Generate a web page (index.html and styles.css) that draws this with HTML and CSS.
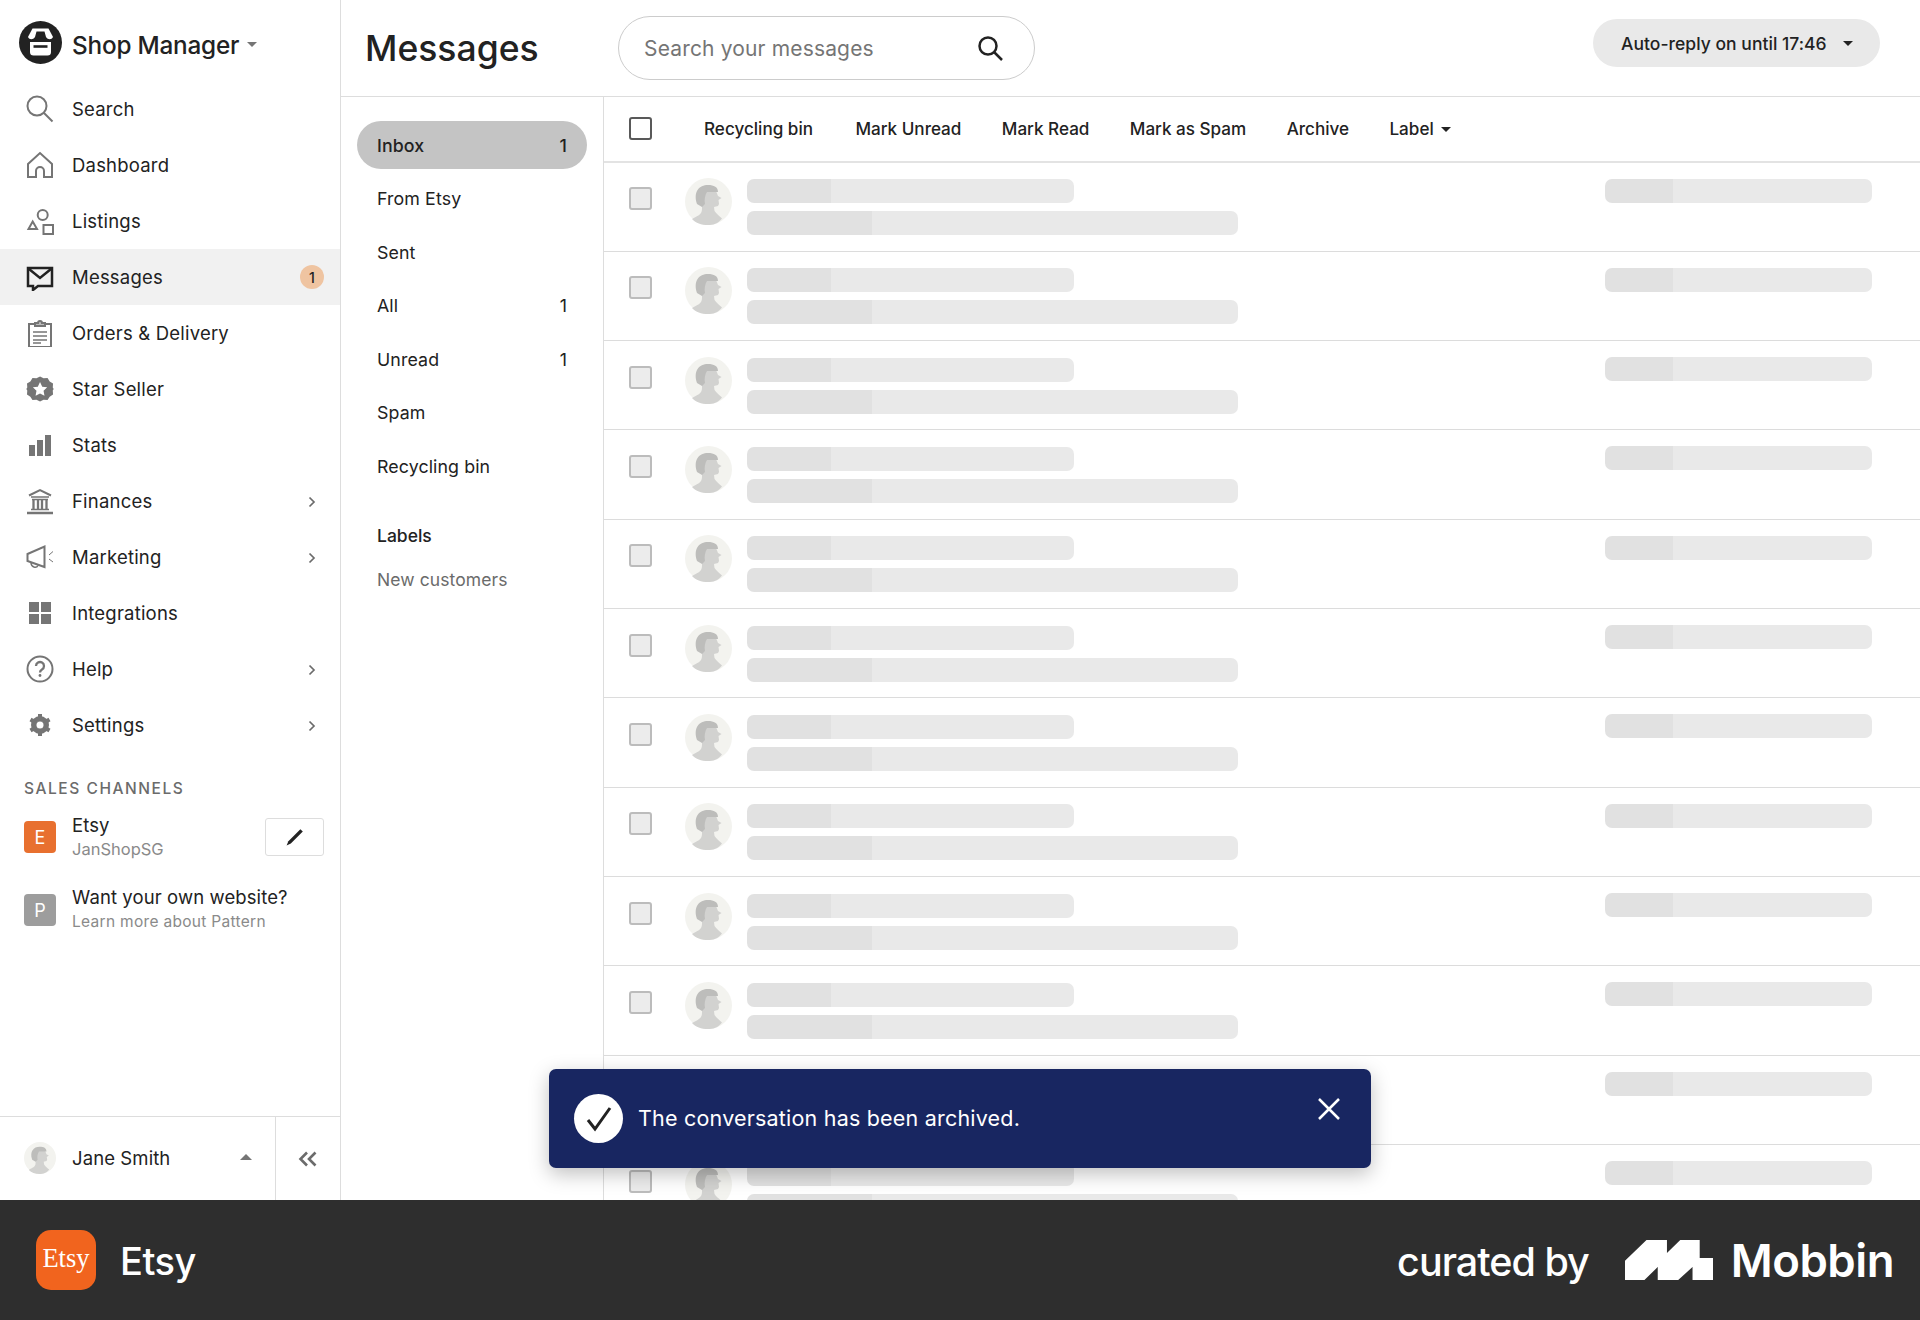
FILE: index.html
```html
<!DOCTYPE html>
<html lang="en">
<head>
<meta charset="utf-8">
<title>Messages - Shop Manager</title>
<link rel="stylesheet" href="styles.css">
</head>
<body>
<svg class="defs" width="0" height="0" aria-hidden="true">
  <symbol id="person" viewBox="0 0 47 47">
    <circle cx="23.5" cy="23.5" r="23.5" fill="#f3f3ef"/>
    <path fill="#d2d2d0" d="M7 41C12 38 17 37 17 31V18l6-6 8 1 2 5 3.500 2-3 2 .5 4-1 2-4 1 .5 4c2 3 5 5 7.500 7.500C33 46 28 47 23 47 16 47 11 45 7 41Z"/>
    <path fill="#bdbdbb" d="M12 26C8 14 14 7 23 7c6 0 10 2 10 7H22c-2 3-3 8-2 12l-3 3Z"/>
  </symbol>
  <symbol id="chev" viewBox="0 0 8 12">
    <path d="M1.500 1.500 6 6l-4.500 4.500" fill="none" stroke="#6b6b6b" stroke-width="1.700"/>
  </symbol>
</svg>
<div class="app">
  <aside class="sidebar">
    <div class="brand">
      <svg class="brand-logo" viewBox="0 0 43 43">
        <circle cx="21.500" cy="21.500" r="21.500" fill="#222"/>
        <path d="M13.500 7.500h16l4.500 8.500H9Z" fill="#fff"/>
        <path d="M16 16l1.500-5.500h8L27 16c-1.500 2.800-3.800 2.800-5.500 0-1.700 2.800-4 2.800-5.500 0Z" fill="#222"/>
        <path d="M9 16c1.500 3 5 3 7 0h11c2 3 5.500 3 7 0" fill="#fff"/>
        <path d="M11 21h21v10a3.500 3.500 0 0 1-3.500 3.500h-14A3.500 3.500 0 0 1 11 31Z" fill="#fff"/>
        <path d="M14.500 25.500h14" stroke="#222" stroke-width="2.600"/>
      </svg>
      <span class="brand-name">Shop Manager</span>
      <span class="tri tri-down tri-gray tri-small"></span>
    </div>
    <nav class="nav">
      <a class="nav-item"><svg class="nav-icon" viewBox="0 0 28 28" fill="none" stroke="#757575" stroke-width="2"><circle cx="11" cy="11" r="9.500"/><path d="m18 18 8.500 8.500"/></svg><span>Search</span></a>
      <a class="nav-item"><svg class="nav-icon" viewBox="0 0 28 28" fill="none" stroke="#757575" stroke-width="2"><path d="M2 26V13L14 2l12 11v13h-8v-6a4 4 0 0 0-8 0v6Z"/></svg><span>Dashboard</span></a>
      <a class="nav-item"><svg class="nav-icon" viewBox="0 0 28 28" fill="none" stroke="#757575" stroke-width="2"><circle cx="16.700" cy="8" r="5"/><path d="M2.500 22H11L6.700 14.500Z"/><path d="M17.500 18h9.500v9h-9.500Z"/></svg><span>Listings</span></a>
      <a class="nav-item nav-active"><svg class="nav-icon" viewBox="0 0 28 28" fill="none" stroke="#222" stroke-width="2.500"><path d="M2 5h24v18H12l-5 4v-4H2Z"/><path d="m3 6 11 9 11-9"/></svg><span>Messages</span><span class="badge">1</span></a>
      <a class="nav-item"><svg class="nav-icon" viewBox="0 0 28 28" fill="none" stroke="#757575" stroke-width="2"><path d="M9 5H3v23h22V5h-6"/><path d="M9 7V4h3a2 2 0 0 1 4 0h3v3Z" fill="#bbb"/><path d="M7 13h14M7 17h14M7 21h14M7 24h8" stroke-width="1.300"/></svg><span>Orders &amp; Delivery</span></a>
      <a class="nav-item"><svg class="nav-icon" viewBox="0 0 28 28"><g transform="translate(1 1) scale(.93)"><path fill="#757575" d="m14 .5 3.800 2 4.300-.3 2.300 3.600 3.600 2.300-.3 4.300 1 1.600-1 1.600.3 4.300-3.600 2.300-2.300 3.600-4.300-.3-3.800 2-3.800-2-4.300.3-2.300-3.600-3.600-2.300.3-4.300-1-1.600 1-1.600-.3-4.300 3.600-2.300 2.300-3.600 4.300.3Z"/><path fill="#fff" d="m14 6.500 2.400 5 5.300.7-3.900 3.700 1 5.400-4.800-2.600-4.800 2.600 1-5.400-3.900-3.700 5.300-.7Z"/></g></svg><span>Star Seller</span></a>
      <a class="nav-item"><svg class="nav-icon" viewBox="0 0 28 28" fill="#757575"><rect x="3" y="14" width="6" height="11"/><rect x="11" y="9" width="6" height="16"/><rect x="19" y="4" width="6" height="21"/></svg><span>Stats</span></a>
      <a class="nav-item"><svg class="nav-icon" viewBox="0 0 28 28" fill="none" stroke="#757575" stroke-width="2"><path d="M3 8.500 14 3l11 5.500" stroke-width="2"/><path d="M5 10h18M6 12.500h16M5 22.500h18" stroke-width="1.500"/><path d="M7.500 13v9M12 13v9M16 13v9M20.500 13v9" stroke-width="2.300"/><path d="M1 26h26" stroke-width="2.500"/></svg><span>Finances</span><svg class="chev" viewBox="0 0 8 12"><use href="#chev"/></svg></a>
      <a class="nav-item"><svg class="nav-icon" viewBox="0 0 28 28" fill="none" stroke="#757575" stroke-width="2"><path d="M1.500 11v7l17 6V3.500Z"/><path d="M5 19.500c0 5 5.500 6 7 3" stroke-width="1.500"/><path d="m27 8.500-4 3.500 0 0M23 16l4 3" stroke-width="1"/></svg><span>Marketing</span><svg class="chev" viewBox="0 0 8 12"><use href="#chev"/></svg></a>
      <a class="nav-item"><svg class="nav-icon" viewBox="0 0 28 28" fill="#757575"><rect x="3" y="3" width="10" height="10"/><rect x="15" y="3" width="10" height="10"/><rect x="3" y="15" width="10" height="10"/><rect x="15" y="15" width="10" height="10"/></svg><span>Integrations</span></a>
      <a class="nav-item"><svg class="nav-icon" viewBox="0 0 28 28" fill="none" stroke="#757575" stroke-width="2"><circle cx="14" cy="14" r="12.500"/><path d="M10 11a4 4 0 1 1 6 3.500c-1.300.8-2 1.500-2 3" stroke-width="2.300"/><circle cx="14" cy="20.500" r="1.400" fill="#757575" stroke="none"/></svg><span>Help</span><svg class="chev" viewBox="0 0 8 12"><use href="#chev"/></svg></a>
      <a class="nav-item"><svg class="nav-icon" viewBox="0 0 28 28" fill="none" stroke="#757575"><circle cx="14" cy="14" r="6.500" stroke-width="5"/><path d="M14 3v22M4.500 8.500l19 11M4.500 19.500l19-11" stroke-width="4"/><circle cx="14" cy="14" r="3.500" fill="#fff" stroke="none"/></svg><span>Settings</span><svg class="chev" viewBox="0 0 8 12"><use href="#chev"/></svg></a>
    </nav>
    <h2 class="channels-title">SALES CHANNELS</h2>
    <div class="channel">
      <span class="channel-mark mark-etsy">E</span>
      <div class="channel-text"><div class="channel-name">Etsy</div><div class="channel-sub">JanShopSG</div></div>
      <button class="edit-btn" type="button"><svg viewBox="0 0 20 20" width="24" height="24" fill="#222"><path d="M4.500 13.500 14.500 3.500l2 2L6.500 15.500 3 17Z"/></svg></button>
    </div>
    <div class="channel channel-pattern">
      <span class="channel-mark mark-pattern">P</span>
      <div class="channel-text"><div class="channel-name">Want your own website?</div><div class="channel-sub channel-sub-small">Learn more about Pattern</div></div>
    </div>
    <div class="user-bar">
      <div class="user">
        <svg class="user-avatar" viewBox="0 0 47 47"><use href="#person"/></svg>
        <span>Jane Smith</span>
        <span class="tri tri-up tri-gray"></span>
      </div>
      <div class="collapse">
        <svg viewBox="0 0 20 16" width="20" height="16" fill="none" stroke="#6b6b6b" stroke-width="2.600"><path d="M9 1.500 2.500 8 9 14.500M17.500 1.500 11 8l6.500 6.500"/></svg>
      </div>
    </div>
  </aside>

  <main class="main">
    <header class="topbar">
      <h1 class="page-title">Messages</h1>
      <div class="search">
        <span class="search-text">Search your messages</span>
        <svg viewBox="0 0 28 28" width="28" height="28" fill="none" stroke="#222" stroke-width="2.500"><circle cx="12" cy="12" r="8.500"/><path d="m18 18 8 8"/></svg>
      </div>
      <div class="auto-reply"><span>Auto-reply on until 17:46</span><span class="tri tri-down tri-dark tri-small"></span></div>
    </header>
    <div class="content">
      <div class="folders">
        <div class="folder folder-active"><span>Inbox</span><span>1</span></div>
        <div class="folder"><span>From Etsy</span></div>
        <div class="folder"><span>Sent</span></div>
        <div class="folder"><span>All</span><span>1</span></div>
        <div class="folder"><span>Unread</span><span>1</span></div>
        <div class="folder"><span>Spam</span></div>
        <div class="folder"><span>Recycling bin</span></div>
        <div class="labels-title">Labels</div>
        <div class="label-item">New customers</div>
      </div>
      <section class="list">
        <div class="toolbar">
          <span class="check check-main"></span>
          <div class="actions">
            <span class="action-first">Recycling bin</span><span>Mark Unread</span><span>Mark Read</span><span>Mark as Spam</span><span>Archive</span>
            <span class="action-label">Label<span class="tri tri-down tri-dark tri-small"></span></span>
          </div>
        </div>
        <div class="row"><span class="check"></span><svg class="avatar" viewBox="0 0 47 47"><use href="#person"/></svg><div class="lines"><div class="bar bar-a"></div><div class="bar bar-b"></div></div><div class="bar bar-c"></div></div>
        <div class="row"><span class="check"></span><svg class="avatar" viewBox="0 0 47 47"><use href="#person"/></svg><div class="lines"><div class="bar bar-a"></div><div class="bar bar-b"></div></div><div class="bar bar-c"></div></div>
        <div class="row"><span class="check"></span><svg class="avatar" viewBox="0 0 47 47"><use href="#person"/></svg><div class="lines"><div class="bar bar-a"></div><div class="bar bar-b"></div></div><div class="bar bar-c"></div></div>
        <div class="row"><span class="check"></span><svg class="avatar" viewBox="0 0 47 47"><use href="#person"/></svg><div class="lines"><div class="bar bar-a"></div><div class="bar bar-b"></div></div><div class="bar bar-c"></div></div>
        <div class="row"><span class="check"></span><svg class="avatar" viewBox="0 0 47 47"><use href="#person"/></svg><div class="lines"><div class="bar bar-a"></div><div class="bar bar-b"></div></div><div class="bar bar-c"></div></div>
        <div class="row"><span class="check"></span><svg class="avatar" viewBox="0 0 47 47"><use href="#person"/></svg><div class="lines"><div class="bar bar-a"></div><div class="bar bar-b"></div></div><div class="bar bar-c"></div></div>
        <div class="row"><span class="check"></span><svg class="avatar" viewBox="0 0 47 47"><use href="#person"/></svg><div class="lines"><div class="bar bar-a"></div><div class="bar bar-b"></div></div><div class="bar bar-c"></div></div>
        <div class="row"><span class="check"></span><svg class="avatar" viewBox="0 0 47 47"><use href="#person"/></svg><div class="lines"><div class="bar bar-a"></div><div class="bar bar-b"></div></div><div class="bar bar-c"></div></div>
        <div class="row"><span class="check"></span><svg class="avatar" viewBox="0 0 47 47"><use href="#person"/></svg><div class="lines"><div class="bar bar-a"></div><div class="bar bar-b"></div></div><div class="bar bar-c"></div></div>
        <div class="row"><span class="check"></span><svg class="avatar" viewBox="0 0 47 47"><use href="#person"/></svg><div class="lines"><div class="bar bar-a"></div><div class="bar bar-b"></div></div><div class="bar bar-c"></div></div>
        <div class="row"><span class="check"></span><svg class="avatar" viewBox="0 0 47 47"><use href="#person"/></svg><div class="lines"><div class="bar bar-a"></div><div class="bar bar-b"></div></div><div class="bar bar-c"></div></div>
        <div class="row"><span class="check"></span><svg class="avatar" viewBox="0 0 47 47"><use href="#person"/></svg><div class="lines"><div class="bar bar-a"></div><div class="bar bar-b"></div></div><div class="bar bar-c"></div></div>
      </section>
    </div>
  </main>

  <div class="toast">
    <span class="toast-check"><svg viewBox="0 0 48 48" width="48" height="48" fill="none" stroke="#222" stroke-width="3"><path d="m13 25 7 9 15-21"/></svg></span>
    <span class="toast-text">The conversation has been archived.</span>
    <svg class="toast-close" viewBox="0 0 24 24" width="24" height="24" fill="none" stroke="#fff" stroke-width="2.500"><path d="m2 2 20 20M22 2 2 22"/></svg>
  </div>
</div>
<footer class="credit">
  <div class="credit-app">
    <span class="credit-icon">Etsy</span>
    <span class="credit-name">Etsy</span>
  </div>
  <div class="credit-by">
    <span class="credit-curated">curated by</span>
    <svg class="mobbin-logo" viewBox="0 0 86 40" width="88" height="40" preserveAspectRatio="none"><path fill="#fff" d="M0 40V20.700L21 0h20v13L54 0h19v18h13v22H66V27L52 40H32V27L19 40Z"/></svg>
    <span class="credit-mobbin">Mobbin</span>
  </div>
</footer>
</body>
</html>
```
FILE: styles.css
```css
* { box-sizing: border-box; }
html, body { margin: 0; padding: 0; }
body {
  width: 1920px;
  height: 1320px;
  overflow: hidden;
  background: #fff;
  color: #222;
  font-family: Inter, "Noto Sans", sans-serif;
  font-size: 18px;
}
.defs { position: absolute; }
.app { position: relative; display: flex; height: 1200px; overflow: hidden; }

/* Triangles */
.tri { display: inline-block; width: 0; height: 0; border-left: 6px solid transparent; border-right: 6px solid transparent; }
.tri-down { border-top: 6px solid #222; }
.tri-up { border-bottom: 6px solid #222; }
.tri-gray.tri-down { border-top-color: #757575; }
.tri-gray.tri-up { border-bottom-color: #757575; }
.tri-small { border-left-width: 5px; border-right-width: 5px; border-top-width: 5px; }
.action-label .tri-small { margin-left: 7px; }

/* Sidebar */
.sidebar { width: 341px; flex: none; display: flex; flex-direction: column; border-right: 1px solid #ddd; }
.brand { display: flex; align-items: center; height: 81px; padding: 4px 0 0 19px; }
.brand-logo { width: 43px; height: 43px; flex: none; }
.brand-name { margin-left: 10px; font-size: 24.300px; line-height: 30px; font-weight: 500; letter-spacing: -.2px; padding-top: 4px; }
.brand .tri { margin-left: 8px; margin-top: 4px; }
.nav { display: flex; flex-direction: column; }
.nav-item { display: flex; align-items: center; height: 56px; padding-left: 26px; font-size: 18.500px; color: #222; letter-spacing: .2px; }
.nav-active { background: #f1f1f1; }
.nav-icon { width: 28px; height: 28px; flex: none; margin-right: 18px; }
.chev { width: 8px; height: 12px; margin-left: auto; margin-right: 24px; margin-top: 2px; }
.badge { margin-left: auto; margin-right: 16px; width: 24px; height: 24px; border-radius: 50%; background: #efc4a1; font-size: 14px; font-weight: 500; display: flex; align-items: center; justify-content: center; }
.channels-title { margin: 26px 0 0 24px; font-size: 15.500px; line-height: 20px; font-weight: 500; color: #6b6b6b; letter-spacing: 1.550px; }
.channel { display: flex; align-items: center; margin: 14px 16px 0 24px; height: 48px; }
.channel-pattern { margin-top: 25px; }
.channel-mark { width: 32px; height: 32px; flex: none; border-radius: 4px; color: #fff; font-size: 18px; display: flex; align-items: center; justify-content: center; }
.mark-etsy { background: #e8702f; }
.mark-pattern { background: #9d9d9d; }
.channel-text { margin-left: 16px; flex: 1; }
.channel-name { font-size: 18.500px; line-height: 24px; letter-spacing: .1px; }
.channel-sub { font-size: 16.500px; line-height: 24px; color: #8a8a8a; }
.channel-sub-small { font-size: 15.500px; letter-spacing: .3px; line-height: 26px; }
.edit-btn { width: 59px; height: 38px; padding: 0; background: #fff; border: 1.500px solid #ddd; border-radius: 3px; display: flex; align-items: center; justify-content: center; }
.user-bar { margin-top: auto; height: 84px; display: flex; border-top: 1px solid #ddd; }
.user { flex: 1; display: flex; align-items: center; padding: 0 0 2px 24px; font-size: 18.500px; letter-spacing: .1px; }
.user-avatar { width: 32px; height: 32px; flex: none; margin-right: 16px; }
.user .tri { margin-left: auto; margin-right: 23px; margin-top: -2px; }
.collapse { width: 65px; flex: none; border-left: 1px solid #ddd; display: flex; align-items: center; justify-content: center; }

/* Main */
.main { flex: 1; min-width: 0; display: flex; flex-direction: column; }
.topbar { height: 97px; flex: none; display: flex; align-items: flex-start; border-bottom: 1.500px solid #ddd; padding-left: 24px; position: relative; }
.page-title { margin: 25px 0 0 0; font-size: 35.500px; line-height: 48px; font-weight: 500; letter-spacing: 0; width: 253px; }
.search { margin-top: 16px; width: 417px; height: 64px; border: 1.500px solid #ccc; border-radius: 32px; display: flex; align-items: center; justify-content: space-between; padding: 0 30px 0 25px; }
.search-text { font-size: 21px; color: #757575; letter-spacing: .16px; }
.auto-reply { margin: 19px 40px 0 auto; width: 287px; height: 48px; border-radius: 24px; background: #e9e9e9; display: flex; align-items: center; justify-content: space-between; padding: 0 27px 0 28px; font-size: 17.500px; font-weight: 500; letter-spacing: .03px; }
.content { flex: 1; min-height: 0; display: flex; }
.folders { width: 263px; flex: none; border-right: 1.500px solid #ddd; padding: 24px 16px 0; }
.folder { height: 48px; margin-bottom: 5.600px; border-radius: 24px; padding: 0 20px; display: flex; align-items: center; justify-content: space-between; font-size: 17.800px; letter-spacing: .1px; }
.folder-active { background: #c4c4c4; font-weight: 500; }
.labels-title { margin: 33px 0 0 20px; font-size: 17.500px; line-height: 24px; font-weight: 500; }
.label-item { margin: 20px 0 0 20px; font-size: 17.500px; line-height: 24px; color: #6b6b6b; letter-spacing: .1px; }

/* List */
.list { flex: 1; min-width: 0; overflow: hidden; }
.toolbar { height: 65.500px; display: flex; align-items: flex-start; padding-left: 25px; border-bottom: 2px solid #e3e3e3; }
.check { display: block; width: 23px; height: 23px; flex: none; border: 2px solid #bcbcbc; border-radius: 3px; background: #ececec; margin-top: 24.500px; }
.check-main { background: #fff; border-color: #595959; margin-top: 20px; }
.actions { display: flex; gap: 40.400px; margin: 20px 0 0 52px; font-size: 17.100px; line-height: 24px; font-weight: 500; }
.action-first { padding-right: 2px; }
.action-label { display: flex; align-items: center; }
.row { height: 89.330px; display: flex; align-items: flex-start; padding-left: 25px; border-bottom: 1.500px solid #dcdcdc; }
.avatar { width: 47px; height: 47px; flex: none; margin: 15.500px 0 0 33px; }
.lines { margin: 16.500px 0 0 15px; display: flex; flex-direction: column; gap: 8px; }
.bar { height: 24px; border-radius: 7px; }
.bar-a { width: 327px; background: linear-gradient(90deg, #e1e1e1 84px, #e9e9e9 84px); }
.bar-b { width: 491px; background: linear-gradient(90deg, #e1e1e1 125px, #e9e9e9 125px); }
.bar-c { width: 267px; margin: 16px 48px 0 auto; background: linear-gradient(90deg, #e1e1e1 68px, #e9e9e9 68px); }

/* Toast */
.toast { position: absolute; left: 549px; top: 1069px; width: 822px; height: 99px; border-radius: 7px; background: #182661; box-shadow: 0 6px 20px rgba(0,0,0,.25); color: #fff; display: flex; align-items: center; padding-left: 25px; }
.toast-check { width: 49px; height: 49px; border-radius: 50%; background: #fff; flex: none; display: flex; align-items: center; justify-content: center; }
.toast-text { margin-left: 15px; padding-bottom: 1px; font-size: 21.500px; letter-spacing: .2px; }
.toast-close { position: absolute; right: 30px; top: 28px; }

/* Credit */
.credit { height: 120px; background: #2e2e2e; color: #fff; display: flex; align-items: center; justify-content: space-between; padding: 0 26px 0 36px; }
.credit-app { display: flex; align-items: center; }
.credit-icon { width: 60px; height: 60px; border-radius: 15px; background: #f1641e; font-family: "Liberation Serif", serif; font-size: 26.500px; display: flex; align-items: center; justify-content: center; padding-bottom: 3px; }
.credit-name { margin-left: 24px; padding-top: 2px; font-size: 38px; font-weight: 500; letter-spacing: -.5px; }
.credit-by { display: flex; align-items: center; }
.credit-curated { font-size: 39.500px; font-weight: 500; letter-spacing: -1px; margin-right: 36px; padding-top: 3px; }
.credit-mobbin { margin-left: 18px; font-size: 45.500px; font-weight: 600; letter-spacing: -.5px; }
```
